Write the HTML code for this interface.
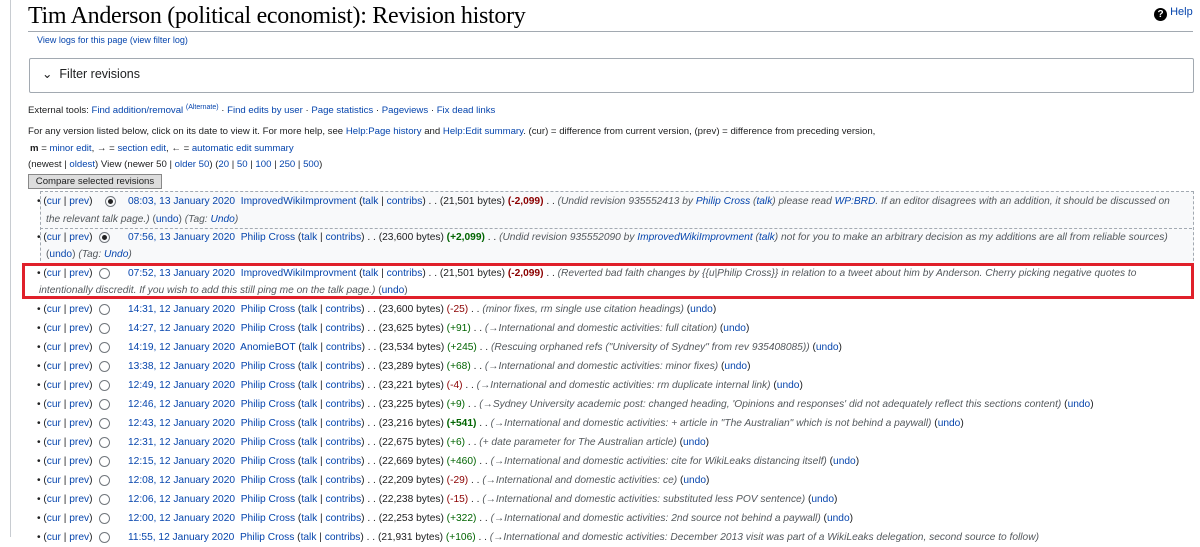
<!DOCTYPE html><html><head><meta charset="utf-8"><style>
body{margin:0;width:1200px;height:537px;overflow:hidden;background:#fff;font-family:"Liberation Sans",Arial,sans-serif;font-size:10.2px;color:#202122;position:relative}
a{color:#0645ad;text-decoration:none}
.abs{position:absolute;white-space:nowrap}
.lb{position:absolute;left:10px;top:0;width:1px;height:537px;background:#c8ccd1}
h1{position:absolute;left:28px;top:3px;margin:0;font:24px "Liberation Serif",serif;font-weight:normal;color:#000;letter-spacing:-0.3px}
.hr{position:absolute;left:28px;top:31px;width:1165px;height:1px;background:#a2a9b1}
.fb{position:absolute;left:29px;top:58px;width:1163px;height:33px;border:1px solid #a2a9b1;border-radius:2px}
.row{position:absolute;left:37px;white-space:nowrap;height:19px;line-height:19px}
.row .d{position:absolute;left:91px}
.row .rd{position:absolute;left:62px;top:4px}
.i{font-style:italic;color:#54595d}
.r{color:#8b0000}.g{color:#006400}
.rd{display:inline-block;width:9px;height:9px;border:1px solid #72777d;border-radius:50%}
.rd.on::after{content:"";display:block;width:5px;height:5px;margin:2px;border-radius:50%;background:#222}
</style></head><body>
<div class="lb"></div>
<h1>Tim Anderson (political economist): Revision history</h1>
<div class="abs" style="left:1154px;top:6px;font-size:11px"><span style="display:inline-block;width:13px;height:13px;border-radius:50%;background:#000;color:#fff;font-weight:bold;text-align:center;line-height:13px;font-size:10px;vertical-align:-2px">?</span> <a>Help</a></div>
<div class="hr"></div>
<div class="abs" style="left:37px;top:35px;font-size:9px"><a>View logs for this page</a> <a>(view filter log)</a></div>
<div class="fb"></div>
<div class="abs" style="left:42px;top:66px;font-size:12.5px">&#8964;&nbsp; Filter revisions</div>
<div class="abs" style="left:28px;top:104px;font-size:9.6px">External tools: <a>Find addition/removal</a> <sup style="font-size:7px"><a>(Alternate)</a></sup> · <a>Find edits by user</a> · <a>Page statistics</a> · <a>Pageviews</a> · <a>Fix dead links</a></div>
<div class="abs" style="left:28px;top:126px;font-size:9.6px">For any version listed below, click on its date to view it. For more help, see <a>Help:Page history</a> and <a>Help:Edit summary</a>. (cur) = difference from current version, (prev) = difference from preceding version,</div>
<div class="abs" style="left:30px;top:143px;font-size:9.6px"><b>m</b> = <a>minor edit</a>, → = <a>section edit</a>, ← = <a>automatic edit summary</a></div>
<div class="abs" style="left:28px;top:159px;font-size:9.6px">(newest | <a>oldest</a>) View (newer 50 | <a>older 50</a>) (<a>20</a> | <a>50</a> | <a>100</a> | <a>250</a> | <a>500</a>)</div>
<div class="abs" style="left:28px;top:174px;width:132px;height:13px;border:1px solid #888;background:#ddd;font-size:9.6px;line-height:13px;text-align:center">Compare selected revisions</div>
<div class="abs" style="left:40px;top:191px;width:1152px;height:74px;border:1px dashed #a2a9b1;border-width:1px 1px 0 1px;background:#f8f9fa"></div>
<div class="abs" style="left:40px;top:228px;width:1152px;border-top:1px dashed #a2a9b1"></div>
<div class="abs" style="left:22px;top:263px;width:1166px;height:30px;border:3px solid #e0202a"></div>
<div class="row" style="top:192px">• (<a>cur</a> | <a>prev</a>) <span class="rd on" style="left:68px"></span><span class="d"><a>08:03, 13 January 2020</a>&nbsp; <a>ImprovedWikiImprovment</a> (<a>talk</a> | <a>contribs</a>) . . (21,501 bytes) <b class="r">(-2,099)</b> . . <span class="i">(Undid revision 935552413 by <a>Philip Cross</a> (<a>talk</a>) please read <a>WP:BRD</a>. If an editor disagrees with an addition, it should be discussed on</span></span></div>
<div class="row i" style="top:210px;left:46px">the relevant talk page.) <span style="font-style:normal">(<a>undo</a>)</span> (Tag: <a>Undo</a>)</div>
<div class="row" style="top:228px">• (<a>cur</a> | <a>prev</a>)<span class="rd on"></span><span class="d"><a>07:56, 13 January 2020</a>&nbsp; <a>Philip Cross</a> (<a>talk</a> | <a>contribs</a>) . . (23,600 bytes) <b class="g">(+2,099)</b> . . <span class="i">(Undid revision 935552090 by <a>ImprovedWikiImprovment</a> (<a>talk</a>) not for you to make an arbitrary decision as my additions are all from reliable sources)</span></span></div>
<div class="row i" style="top:245px;left:46px"><span style="font-style:normal">(<a>undo</a>)</span> (Tag: <a>Undo</a>)</div>
<div class="row" style="top:264px">• (<a>cur</a> | <a>prev</a>)<span class="rd"></span><span class="d"><a>07:52, 13 January 2020</a>&nbsp; <a>ImprovedWikiImprovment</a> (<a>talk</a> | <a>contribs</a>) . . (21,501 bytes) <b class="r">(-2,099)</b> . . <span class="i">(Reverted bad faith changes by {{u|Philip Cross}} in relation to a tweet about him by Anderson. Cherry picking negative quotes to</span></span></div>
<div class="row i" style="top:281px;left:39px">intentionally discredit. If you wish to add this still ping me on the talk page.) <span style="font-style:normal">(<a>undo</a>)</span></div>
<div class="row" style="top:300px">• (<a>cur</a> | <a>prev</a>)<span class="rd"></span><span class="d"><a>14:31, 12 January 2020</a>&nbsp; <a>Philip Cross</a> (<a>talk</a> | <a>contribs</a>) . . (23,600 bytes) <span class="r">(-25)</span> . . <span class="i">(minor fixes, rm single use citation headings)</span> (<a>undo</a>)</span></div>
<div class="row" style="top:319px">• (<a>cur</a> | <a>prev</a>)<span class="rd"></span><span class="d"><a>14:27, 12 January 2020</a>&nbsp; <a>Philip Cross</a> (<a>talk</a> | <a>contribs</a>) . . (23,625 bytes) <span class="g">(+91)</span> . . <span class="i">(→International and domestic activities: full citation)</span> (<a>undo</a>)</span></div>
<div class="row" style="top:338px">• (<a>cur</a> | <a>prev</a>)<span class="rd"></span><span class="d"><a>14:19, 12 January 2020</a>&nbsp; <a>AnomieBOT</a> (<a>talk</a> | <a>contribs</a>) . . (23,534 bytes) <span class="g">(+245)</span> . . <span class="i">(Rescuing orphaned refs ("University of Sydney" from rev 935408085))</span> (<a>undo</a>)</span></div>
<div class="row" style="top:357px">• (<a>cur</a> | <a>prev</a>)<span class="rd"></span><span class="d"><a>13:38, 12 January 2020</a>&nbsp; <a>Philip Cross</a> (<a>talk</a> | <a>contribs</a>) . . (23,289 bytes) <span class="g">(+68)</span> . . <span class="i">(→International and domestic activities: minor fixes)</span> (<a>undo</a>)</span></div>
<div class="row" style="top:376px">• (<a>cur</a> | <a>prev</a>)<span class="rd"></span><span class="d"><a>12:49, 12 January 2020</a>&nbsp; <a>Philip Cross</a> (<a>talk</a> | <a>contribs</a>) . . (23,221 bytes) <span class="r">(-4)</span> . . <span class="i">(→International and domestic activities: rm duplicate internal link)</span> (<a>undo</a>)</span></div>
<div class="row" style="top:395px">• (<a>cur</a> | <a>prev</a>)<span class="rd"></span><span class="d"><a>12:46, 12 January 2020</a>&nbsp; <a>Philip Cross</a> (<a>talk</a> | <a>contribs</a>) . . (23,225 bytes) <span class="g">(+9)</span> . . <span class="i">(→Sydney University academic post: changed heading, 'Opinions and responses' did not adequately reflect this sections content)</span> (<a>undo</a>)</span></div>
<div class="row" style="top:414px">• (<a>cur</a> | <a>prev</a>)<span class="rd"></span><span class="d"><a>12:43, 12 January 2020</a>&nbsp; <a>Philip Cross</a> (<a>talk</a> | <a>contribs</a>) . . (23,216 bytes) <b class="g">(+541)</b> . . <span class="i">(→International and domestic activities: + article in "The Australian" which is not behind a paywall)</span> (<a>undo</a>)</span></div>
<div class="row" style="top:433px">• (<a>cur</a> | <a>prev</a>)<span class="rd"></span><span class="d"><a>12:31, 12 January 2020</a>&nbsp; <a>Philip Cross</a> (<a>talk</a> | <a>contribs</a>) . . (22,675 bytes) <span class="g">(+6)</span> . . <span class="i">(+ date parameter for The Australian article)</span> (<a>undo</a>)</span></div>
<div class="row" style="top:452px">• (<a>cur</a> | <a>prev</a>)<span class="rd"></span><span class="d"><a>12:15, 12 January 2020</a>&nbsp; <a>Philip Cross</a> (<a>talk</a> | <a>contribs</a>) . . (22,669 bytes) <span class="g">(+460)</span> . . <span class="i">(→International and domestic activities: cite for WikiLeaks distancing itself)</span> (<a>undo</a>)</span></div>
<div class="row" style="top:471px">• (<a>cur</a> | <a>prev</a>)<span class="rd"></span><span class="d"><a>12:08, 12 January 2020</a>&nbsp; <a>Philip Cross</a> (<a>talk</a> | <a>contribs</a>) . . (22,209 bytes) <span class="r">(-29)</span> . . <span class="i">(→International and domestic activities: ce)</span> (<a>undo</a>)</span></div>
<div class="row" style="top:490px">• (<a>cur</a> | <a>prev</a>)<span class="rd"></span><span class="d"><a>12:06, 12 January 2020</a>&nbsp; <a>Philip Cross</a> (<a>talk</a> | <a>contribs</a>) . . (22,238 bytes) <span class="r">(-15)</span> . . <span class="i">(→International and domestic activities: substituted less POV sentence)</span> (<a>undo</a>)</span></div>
<div class="row" style="top:509px">• (<a>cur</a> | <a>prev</a>)<span class="rd"></span><span class="d"><a>12:00, 12 January 2020</a>&nbsp; <a>Philip Cross</a> (<a>talk</a> | <a>contribs</a>) . . (22,253 bytes) <span class="g">(+322)</span> . . <span class="i">(→International and domestic activities: 2nd source not behind a paywall)</span> (<a>undo</a>)</span></div>
<div class="row" style="top:528px">• (<a>cur</a> | <a>prev</a>)<span class="rd"></span><span class="d"><a>11:55, 12 January 2020</a>&nbsp; <a>Philip Cross</a> (<a>talk</a> | <a>contribs</a>) . . (21,931 bytes) <span class="g">(+106)</span> . . <span class="i">(→International and domestic activities: December 2013 visit was part of a WikiLeaks delegation, second source to follow)</span></span></div>
</body></html>
